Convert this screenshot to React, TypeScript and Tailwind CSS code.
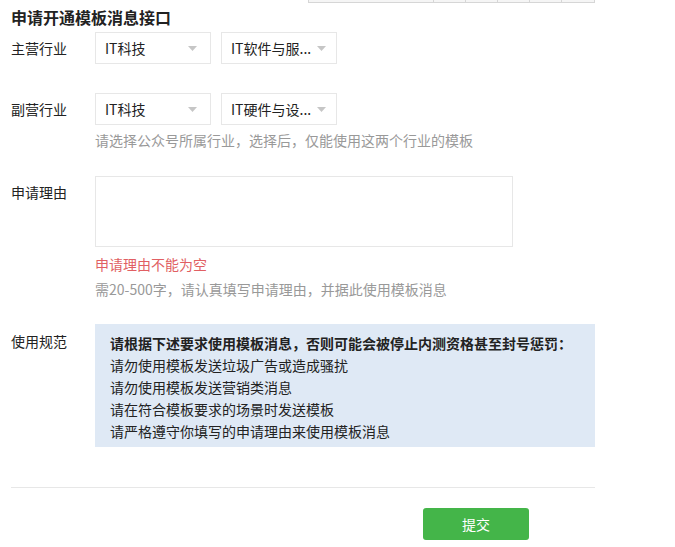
const font = { fontFamily: '"Noto Sans CJK SC", "Noto Sans", sans-serif' };

function Arrow() {
  return (
    <svg width="9" height="5" viewBox="0 0 9 5" className="shrink-0">
      <path d="M0 0 L9 0 L4.5 5 Z" fill="#c6c6c6" />
    </svg>
  );
}

function Select({ value, pr }: { value: string; pr: string }) {
  return (
    <div className={`flex h-[32px] w-[116px] items-center justify-between border border-[#e7e7e7] pl-[9px] ${pr}`}>
      <span className="whitespace-nowrap text-[14px] leading-[20px] text-[#222]">{value}</span>
      <Arrow />
    </div>
  );
}

const rules = [
  '请勿使用模板发送垃圾广告或造成骚扰',
  '请勿使用模板发送营销类消息',
  '请在符合模板要求的场景时发送模板',
  '请严格遵守你填写的申请理由来使用模板消息',
];

const cols = ['w-[125px]', 'w-[33px]', 'w-[32px]', 'w-[32px]', 'w-[32px]', 'w-[33px]'];

export default function App() {
  return (
    <div className="h-[547px] w-[675px] overflow-hidden bg-white" style={font}>
      {/* bottom edge of the table above, scrolled out of view */}
      <div className="ml-[308px] flex h-[3px] w-[287px] border-b border-r border-[#d6d6d6]">
        {cols.map((w, i) => (
          <div key={i} className={`${w} h-full border-l border-[#d6d6d6] bg-[#f5f5f5]`} />
        ))}
      </div>

      <div className="w-[595px] pl-[11px]">
        <h2 className="mt-[3px] h-[22px] text-[16px] font-bold leading-[22px] text-[#222]">申请开通模板消息接口</h2>

        {/* 主营行业 */}
        <div className="mt-[4px] flex items-center">
          <div className="w-[84px] text-[14px] leading-[20px] text-[#222]">主营行业</div>
          <div className="flex gap-[10px]">
            <Select value="IT科技" pr="pr-[13px]" />
            <Select value="IT软件与服..." pr="pr-[10px]" />
          </div>
        </div>

        {/* 副营行业 */}
        <div className="mt-[29px] flex items-center">
          <div className="w-[84px] text-[14px] leading-[20px] text-[#222]">副营行业</div>
          <div className="flex gap-[10px]">
            <Select value="IT科技" pr="pr-[13px]" />
            <Select value="IT硬件与设..." pr="pr-[10px]" />
          </div>
        </div>
        <p className="ml-[84px] mt-[5px] text-[14px] leading-[20px] text-[#999]">
          请选择公众号所属行业，选择后，仅能使用这两个行业的模板
        </p>

        {/* 申请理由 */}
        <div className="mt-[26px] flex">
          <div className="w-[84px] pt-[6px] text-[14px] leading-[20px] text-[#222]">申请理由</div>
          <div>
            <textarea className="block h-[71px] w-[418px] resize-none border border-[#e7e7e7] outline-none" />
            <p className="mt-[7px] text-[14px] leading-[20px] text-[#e15f63]">申请理由不能为空</p>
            <p className="mt-[5px] text-[14px] leading-[20px] text-[#999]">
              需20-500字，请认真填写申请理由，并据此使用模板消息
            </p>
          </div>
        </div>

        {/* 使用规范 */}
        <div className="mt-[25px] flex">
          <div className="w-[84px] pt-[7px] text-[14px] leading-[20px] text-[#222]">使用规范</div>
          <div className="w-[500px] bg-[#dfe9f5] px-[15px] pb-[5px] pt-[8px] text-[14px] leading-[22px] text-[#222]">
            <p className="font-bold">请根据下述要求使用模板消息，否则可能会被停止内测资格甚至封号惩罚：</p>
            {rules.map((r) => (
              <p key={r}>{r}</p>
            ))}
          </div>
        </div>

        <div className="mt-[40px] h-px bg-[#e7e7e7]" />

        <button className="ml-[412px] mt-[20px] h-[32px] w-[106px] rounded-[3px] bg-[#44b549] text-[14px] text-white">
          提交
        </button>
      </div>
    </div>
  );
}
